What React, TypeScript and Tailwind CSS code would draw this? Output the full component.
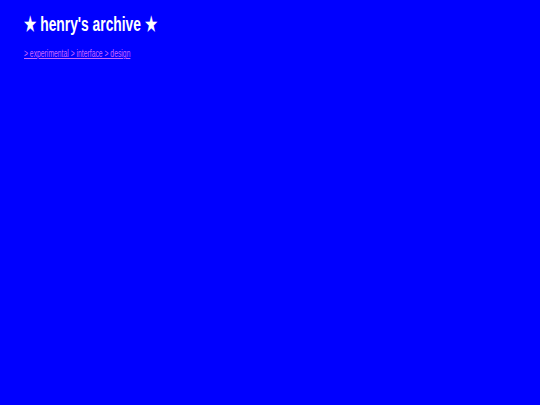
export default function App() {
  return (
    <div className="w-[540px] h-[405px] bg-[#0000ff] px-6 pt-[12px]" style={{ fontFamily: '"Liberation Sans", Arial, sans-serif' }}>
      <h1 className="text-[20px] font-bold text-white leading-[24px] m-0 origin-left scale-x-[0.69] whitespace-nowrap">★ henry's archive ★</h1>
      <div className="mt-[12px] text-[10px] leading-[12px] origin-left scale-x-[0.68] whitespace-nowrap">
        <a href="#" className="text-[#cc66ff] underline">&gt; experimental &gt; interface &gt; design</a>
      </div>
    </div>
  );
}
